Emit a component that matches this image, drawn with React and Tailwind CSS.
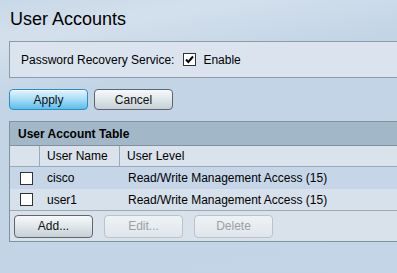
import React from 'react';

const users = [
  { name: 'cisco', level: 'Read/Write Management Access (15)' },
  { name: 'user1', level: 'Read/Write Management Access (15)' },
];

const Check = ({ checked }) => (
  <span className="flex h-[13px] w-[13px] items-center justify-center border border-[#333] bg-white">
    {checked ? (
      <svg width="11" height="11" viewBox="0 0 11 11">
        <path d="M2 5.5 L4.3 8 L9 2.5" fill="none" stroke="#000" strokeWidth="2" />
      </svg>
    ) : null}
  </span>
);

const Btn = ({ label, kind, tall }) => {
  const styles = {
    primary:
      'border-[#2c8ec2] bg-[linear-gradient(#e4f6fe,#a6dcf6_50%,#5cbde9)] text-[#111] shadow-[inset_0_1px_0_#fff]',
    normal:
      'border-[#5f666b] bg-[linear-gradient(#f7f9fa,#dfe6ea_50%,#c5d0d6)] text-[#111]',
    disabled: 'border-[#b8c3cb] bg-[linear-gradient(#eef2f5,#dfe6eb)] text-[#9aa1a6]',
  };
  return (
    <div
      className={`flex ${tall ? 'h-[23px]' : 'h-[21px]'} w-[79px] items-center justify-center rounded-[4px] border text-[12px] ${styles[kind]}`}
    >
      {label}
    </div>
  );
};

export default function App() {
  return (
    <div
      className="h-[273px] w-[397px] overflow-hidden bg-[linear-gradient(170deg,#c9d8e8_0%,#d3e0ec_12%,#c3d4e6_30%,#c4d5e7_100%)] text-black"
      style={{ fontFamily: '"Liberation Sans", Arial, sans-serif' }}
    >
      <h1 className="pl-[10px] pt-[8px] text-[18px] leading-[22px]">User Accounts</h1>

      <div className="ml-[9px] mt-[11px] flex h-[37px] items-center border border-r-0 border-[#8d9ba7] bg-[#dbe4ee] pl-[11px] text-[12px]">
        <span>Password Recovery Service:</span>
        <span className="ml-[9px]">
          <Check checked />
        </span>
        <span className="ml-[7px]">Enable</span>
      </div>

      <div className="ml-[9px] mt-[11px] flex gap-[6px]">
        <Btn label="Apply" kind="primary" />
        <Btn label="Cancel" kind="normal" />
      </div>

      <div className="ml-[9px] mt-[11px] border border-r-0 border-[#7f929e] bg-[#d9e2eb] text-[12px]">
        <div className="flex h-[24px] items-center border-b border-[#7f929e] bg-[#a2b8c8] pl-[8px] font-bold">
          User Account Table
        </div>
        <div className="flex h-[21px] border-b border-[#9aabb7] bg-[#dae3ec]">
          <div className="w-[30px] border-r border-[#9aabb7]" />
          <div className="flex w-[80px] items-center border-r border-[#9aabb7] pl-[7px]">User Name</div>
          <div className="flex items-center pl-[7px]">User Level</div>
        </div>
        {users.map((u, i) => (
          <div
            key={u.name}
            className={`flex h-[22px] items-center ${i === 0 ? 'bg-[#c6d6e8]' : 'bg-[#d7e1eb]'} ${
              i === users.length - 1 ? 'border-b border-[#9aabb7]' : ''
            }`}
          >
            <div className="flex w-[30px] justify-center pl-[2px]">
              <Check />
            </div>
            <div className="w-[81px] pl-[7px]">{u.name}</div>
            <div className="pl-[7px]">{u.level}</div>
          </div>
        ))}
        <div className="flex h-[30px] items-center gap-[11px] pl-[4px]">
          <Btn label="Add..." kind="normal" tall />
          <Btn label="Edit..." kind="disabled" tall />
          <Btn label="Delete" kind="disabled" tall />
        </div>
      </div>
    </div>
  );
}
